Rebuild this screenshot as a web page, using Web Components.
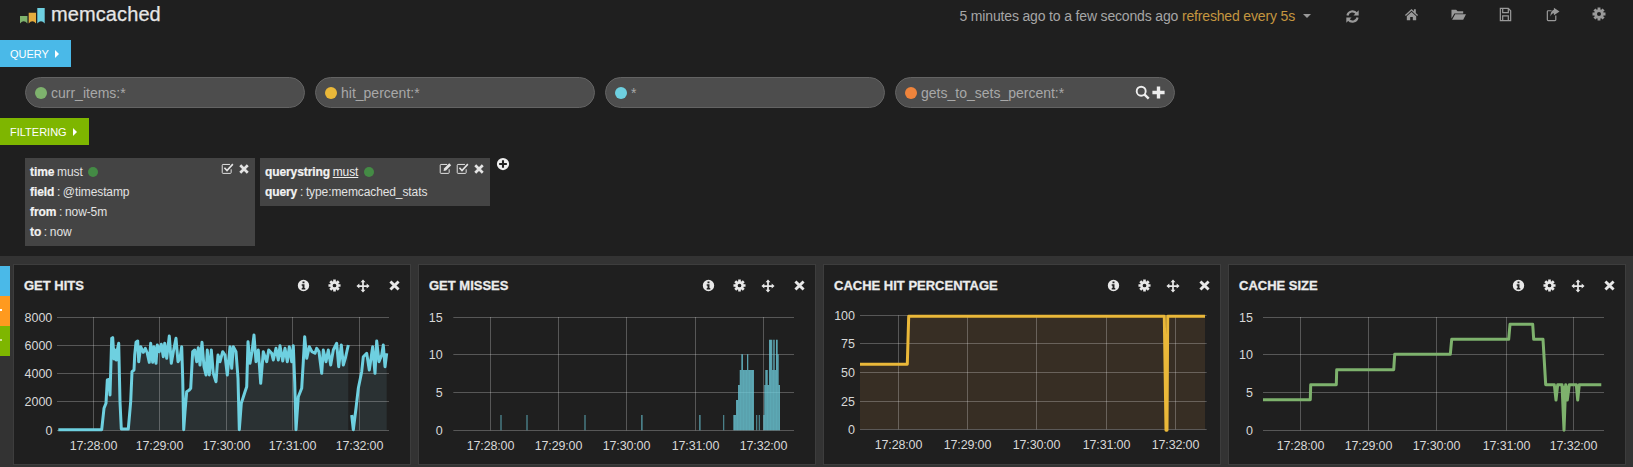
<!DOCTYPE html>
<html>
<head>
<meta charset="utf-8">
<title>memcached</title>
<style>
  html, body { margin: 0; height: 100%; background: #1f1f1f; overflow: hidden; }
  body { font-family: "Liberation Sans", Arial, sans-serif; color: #ddd; }
</style>
</head>
<body>
<km-dashboard></km-dashboard>

<script>
// Gear outline, 8 teeth, with a round hole. Generated since it is tedious to write by hand.
function gearPath() {
  let d = '';
  for (let i = 0; i < 8; i++) {
    const a = i * Math.PI / 4;
    const pts = [[-0.3, 5.4], [-0.22, 7.6], [0.22, 7.6], [0.3, 5.4]];
    pts.forEach(([da, r], j) => {
      const x = 8 + r * Math.sin(a + da), y = 8 - r * Math.cos(a + da);
      d += (i === 0 && j === 0 ? 'M' : 'L') + x.toFixed(2) + ' ' + y.toFixed(2);
    });
  }
  return d + 'Z M8 5.7 A2.3 2.3 0 1 0 8 10.3 A2.3 2.3 0 1 0 8 5.7Z';
}

const CIRCLE = 'M8 1 A7 7 0 1 1 8 15 A7 7 0 1 1 8 1Z ';
const ICONS = {
  home: '<path fill="currentColor" d="M8 2 L1 8.5 L2 9.6 L8 4.1 L14 9.6 L15 8.5 L12.6 6.3 V2.5 H10.6 V4.4Z M8 5.2 L3 9.8 V14.2 H6.6 V10.6 H9.4 V14.2 H13 V9.8Z"/>',
  folder: '<path fill="currentColor" d="M0.5 3 H5.5 L7 4.6 H13 V6.8 H3.6 L0.5 12.2Z M4.4 7.8 H16 L13 13.6 H1.2Z"/>',
  save: '<g fill="none" stroke="currentColor" stroke-width="1.3"><path d="M2.5 1.5 H11 L13.5 4 V14.5 H2.5Z"/><path d="M5 1.5 V6 H11 V1.5"/><path d="M5 14.5 V9.5 H11 V14.5"/></g>',
  share: '<path fill="none" stroke="currentColor" stroke-width="1.3" d="M11.5 9 V13.6 Q11.5 14.5 10.6 14.5 H3.4 Q2.5 14.5 2.5 13.6 V4.9 Q2.5 4 3.4 4 H7"/><path fill="currentColor" d="M9.5 0.8 L15.5 4.8 L9.5 8.8 V6.6 C7.5 6.6 6.5 8 6 10 C5.6 6.5 7.4 3.4 9.5 3Z"/>',
  refresh: '<g fill="none" stroke="currentColor" stroke-width="2.3"><path d="M2.6 7 A5.5 5.5 0 0 1 12.4 4.8"/><path d="M13.4 9 A5.5 5.5 0 0 1 3.6 11.2"/></g><path fill="currentColor" d="M14.6 1.4 V7 H9Z M1.4 14.6 V9 H7Z"/>',
  cog: '<path fill="currentColor" fill-rule="evenodd" d="' + gearPath() + '"/>',
  info: '<path fill="currentColor" fill-rule="evenodd" d="' + CIRCLE + 'M6.8 3 H9.2 V5.2 H6.8Z M5.8 6.4 H9.2 V11 H10.2 V12.8 H5.8 V11 H6.8 V8.2 H5.8Z"/>',
  move: '<path fill="currentColor" d="M8 0.5 L10.8 3.8 H9 V7 H12.2 V5.2 L15.5 8 L12.2 10.8 V9 H9 V12.2 H10.8 L8 15.5 L5.2 12.2 H7 V9 H3.8 V10.8 L0.5 8 L3.8 5.2 V7 H7 V3.8 H5.2Z"/>',
  times: '<path fill="none" stroke="currentColor" stroke-width="3.6" d="M3 3 L13 13 M13 3 L3 13"/>',
  check: '<path fill="none" stroke="currentColor" stroke-width="1.2" d="M12.5 9 V13 Q12.5 14 11.5 14 H2.5 Q1.5 14 1.5 13 V4 Q1.5 3 2.5 3 H11"/><path fill="none" stroke="currentColor" stroke-width="2" d="M4.2 7 L7.4 10.4 L14.6 2.6"/>',
  edit: '<path fill="none" stroke="currentColor" stroke-width="1.2" d="M12.5 9 V13 Q12.5 14 11.5 14 H2.5 Q1.5 14 1.5 13 V4 Q1.5 3 2.5 3 H10"/><path fill="currentColor" d="M5.6 11 L6.2 8 L12.6 1.6 L15 4 L8.6 10.4Z"/>',
  plus: '<path fill="currentColor" d="M6.2 1.5 H9.8 V6.2 H14.5 V9.8 H9.8 V14.5 H6.2 V9.8 H1.5 V6.2 H6.2Z"/>',
  pluscircle: '<path fill="currentColor" fill-rule="evenodd" d="' + CIRCLE + 'M6.8 3.6 H9.2 V6.8 H12.4 V9.2 H9.2 V12.4 H6.8 V9.2 H3.6 V6.8 H6.8Z"/>',
  search: '<g fill="none" stroke="currentColor"><circle cx="6.6" cy="6.6" r="4.8" stroke-width="2"/><path stroke-width="2.6" d="M10 10 L14.6 14.6"/></g>'
};

class KmIcon extends HTMLElement {
  connectedCallback() {
    const size = this.getAttribute('size') || 14;
    this.attachShadow({ mode: 'open' }).innerHTML = `
      <style>:host { display: block; width: ${size}px; height: ${size}px; } svg { display: block; }</style>
      <svg width="${size}" height="${size}" viewBox="0 0 16 16">${ICONS[this.getAttribute('name')]}</svg>`;
  }
}
customElements.define('km-icon', KmIcon);

// Top bar: logo, title, time range, nav icons
class KmNavbar extends HTMLElement {
  connectedCallback() {
    this.attachShadow({ mode: 'open' }).innerHTML = `
    <style>
      :host { display: flex; height: 40px; box-sizing: border-box; padding: 0 27px 0 20px; color: #999; }
      .logo { display: block; margin-top: 8px; }
      h1 { margin: 2px 0 0 5px; font: 20px/24px "Liberation Sans", Arial, sans-serif; letter-spacing: 0.1px; color: #e6e6e6; -webkit-text-stroke: 0.25px #e6e6e6; }
      .time { margin: 8px 0 0 auto; font-size: 14px; line-height: 16px; color: #a6a6a6; letter-spacing: -0.16px; white-space: nowrap; }
      .time span { color: #c4963f; }
      .caret { width: 0; height: 0; margin: 14px 0 0 8px; border: 4px solid transparent; border-top-color: #999; border-bottom: 0; }
      .refresh { margin: 9px 0 0 34px; }
      .nav { display: flex; gap: 32px; margin: 7px 0 0 44px; }
    </style>
    <svg class="logo" width="26" height="16" viewBox="0 0 26 16">
      <path fill="#7eb26d" d="M0 8 H7.4 V15.6 Q3.7 11 0 15.6Z"/>
      <path fill="#e5ac3e" d="M8.7 4.7 H16 V15.6 Q12.4 11 8.7 15.6Z"/>
      <path fill="#6ed0e0" d="M17.3 0 H24.7 V15.6 Q21 11 17.3 15.6Z"/>
    </svg>
    <h1>memcached</h1>
    <div class="time">5 minutes ago to a few seconds ago <span>refreshed every 5s</span></div>
    <div class="caret"></div>
    <km-icon class="refresh" name="refresh" size="15"></km-icon>
    <div class="nav">
      <km-icon name="home" size="15"></km-icon>
      <km-icon name="folder" size="15"></km-icon>
      <km-icon name="save" size="15"></km-icon>
      <km-icon name="share" size="15"></km-icon>
      <km-icon name="cog" size="14"></km-icon>
    </div>`;
  }
}
customElements.define('km-navbar', KmNavbar);

// Coloured section tab (QUERY, FILTERING)
class KmTab extends HTMLElement {
  connectedCallback() {
    this.attachShadow({ mode: 'open' }).innerHTML = `
    <style>
      :host { display: flex; align-items: center; width: max-content; height: 27px; padding: 0 12px 0 10px; background: var(--tab, #4ab9e8); color: #fff; font-size: 11px; }
      i { width: 0; height: 0; margin-left: 6px; border: 4px solid transparent; border-left-color: #fff; border-right: 0; }
    </style>
    <slot></slot><i></i>`;
  }
}
customElements.define('km-tab', KmTab);

// Query input pill with its colour dot
class KmPill extends HTMLElement {
  connectedCallback() {
    const actions = this.hasAttribute('actions') ? `
      <div class="actions"><km-icon name="search" size="15"></km-icon><km-icon name="plus" size="15"></km-icon></div>` : '';
    this.attachShadow({ mode: 'open' }).innerHTML = `
    <style>
      :host { display: flex; align-items: center; box-sizing: border-box; width: 280px; height: 31px; padding: 0 8px 0 9px; background: #4d4d4d; border: 1px solid #636363; border-radius: 16px; color: #a8a8a8; font-size: 14px; }
      .dot { width: 12px; height: 12px; margin-right: 4px; border-radius: 50%; background: ${this.getAttribute('color')}; }
      .actions { display: flex; gap: 1px; margin-left: auto; color: #eee; }
    </style>
    <span class="dot"></span><slot></slot>${actions}`;
  }
}
customElements.define('km-pill', KmPill);

// Filter box, rows are passed through the slot
class KmFilter extends HTMLElement {
  connectedCallback() {
    const icons = (this.getAttribute('icons') || 'check times').split(' ')
      .map(n => `<km-icon name="${n}" size="${n === 'times' ? 12 : 13}"></km-icon>`).join('');
    this.attachShadow({ mode: 'open' }).innerHTML = `
    <style>
      :host { display: block; position: relative; box-sizing: border-box; width: 230px; padding: 4px 5px; background: #444; color: #e2e2e2; font-size: 12px; line-height: 20px; }
      .actions { position: absolute; top: 4px; right: 5px; display: flex; align-items: center; gap: 4px; color: #e4e4e4; }
    </style>
    <div class="actions">${icons}</div>
    <slot></slot>`;
  }
}
customElements.define('km-filter', KmFilter);

// One filter row
class KmRow extends HTMLElement {
  connectedCallback() {
    this.attachShadow({ mode: 'open' }).innerHTML = `
    <style>
      :host { display: block; white-space: nowrap; letter-spacing: -0.1px; word-spacing: -0.5px; }
      ::slotted(b) { color: #f2f2f2; -webkit-text-stroke: 0.2px #f2f2f2; }
      ::slotted(u) { color: #eee; }
      ::slotted(i) { display: inline-block; width: 10px; height: 10px; margin-left: 3px; border-radius: 50%; background: #448b45; vertical-align: -1px; }
    </style>
    <slot></slot>`;
  }
}
customElements.define('km-row', KmRow);

// Panel frame with title and its four small icons
class KmPanel extends HTMLElement {
  connectedCallback() {
    this.attachShadow({ mode: 'open' }).innerHTML = `
    <style>
      :host { display: flex; flex-direction: column; box-sizing: border-box; width: 398px; height: 201px; background: #1f1f1f; border: 1px solid #3d3d3d; }
      header { display: flex; align-items: center; height: 41px; padding: 0 9px 0 10px; box-sizing: border-box; }
      h2 { flex: 1; margin: 0; font: bold 13px "Liberation Sans", Arial, sans-serif; color: #ececec; text-transform: uppercase; -webkit-text-stroke: 0.3px #ececec; }
      km-icon { color: #e8e8e8; }
      .a { margin-right: 18px; } .b { margin-right: 15px; } .c { margin-right: 18px; }
    </style>
    <header>
      <h2>${this.getAttribute('title')}</h2>
      <km-icon class="a" name="info" size="13"></km-icon>
      <km-icon class="b" name="cog" size="13"></km-icon>
      <km-icon class="c" name="move" size="14"></km-icon>
      <km-icon name="times" size="13"></km-icon>
    </header>
    <slot></slot>`;
  }
}
customElements.define('km-panel', KmPanel);

// Chart data is traced from a 3x crop of each panel, so every coordinate is divided by 3 when drawn
const TIMES = ['17:28:00', '17:29:00', '17:30:00', '17:31:00', '17:32:00'];
const CHARTS = {
  hits: {
    ox: 14, left: 171, right: 1167, labelRight: 157,
    ys: [[8000, 186], [6000, 271], [4000, 355], [2000, 439], [0, 526]],
    xs: [280, 478, 679, 877, 1078], color: '#6ed0e0', fill: '#2a3133', base: 526,
    lines: [
      [[175,524],[305,524],[312,460],[318,445],[322,375],[327,373],[330,420],[335,250],[338,248],[342,312],[345,285],[349,315],[352,285],[356,265],[360,440],[364,522],[385,522],[392,440],[396,350],[402,345],[404,300],[408,262],[413,258],[416,320],[422,275],[430,292],[436,280],[442,295],[448,322],[452,265],[458,322],[462,275],[468,325],[472,270],[478,290],[484,268],[490,305],[494,265],[500,310],[508,243],[514,325],[520,290],[528,250],[534,320],[540,310],[545,275],[548,370],[551,524],[555,470],[560,410],[568,405],[572,400],[578,290],[584,285],[590,320],[595,278],[600,330],[606,262],[612,335],[618,360],[622,285],[628,360],[634,285],[640,355],[648,380],[654,300],[660,320],[668,290],[675,300],[682,360],[690,275],[695,340],[700,275],[708,290],[714,370],[718,524],[724,445],[735,410],[740,395],[744,260],[750,325],[756,290],[762,240],[768,320],[775,285],[782,385],[790,290],[800,320],[806,285],[815,295],[820,315],[828,280],[835,315],[840,272],[848,318],[855,280],[862,320],[868,275],[875,320],[880,272],[884,380],[888,524],[895,425],[905,400],[910,320],[914,245],[920,310],[928,275],[936,290],[945,295],[950,280],[957,290],[965,355],[970,285],[978,320],[985,285],[992,330],[1000,285],[1010,265],[1016,335],[1024,270],[1030,330],[1036,310],[1045,270]],
      [[1055,480],[1060,524],[1068,460],[1075,400],[1085,350],[1090,305],[1100,295],[1108,345],[1118,275],[1125,355],[1130,258],[1137,320],[1145,300],[1150,270],[1155,335],[1160,295]]
    ]
  },
  misses: {
    ox: 4, left: 115, right: 1137, labelRight: 83,
    ys: [[15, 186], [10, 298], [5, 412], [0, 526]],
    xs: [226, 430, 634, 841, 1045], color: '#6ed0e0', base: 526,
    // step outlines of the bars: [x, top]
    bars: [
      [[256,480],[260,526]], [[334,480],[338,526]], [[508,480],[512,526]], [[678,480],[683,526]], [[852,480],[857,526]], [[924,480],[928,526]],
      [[955,480],[963,435],[969,390],[974,345],[979,298],[984,345],[996,298],[1000,345],[1017,526]],
      [[1023,480],[1027,526]], [[1031,480],[1035,526]],
      [[1045,480],[1048,390],[1051,345],[1058,390],[1062,254],[1072,345],[1075,254],[1079,345],[1083,254],[1088,298],[1091,390],[1095,526]]
    ]
  },
  percent: {
    ox: 4, left: 120, right: 1160, labelRight: 105,
    ys: [[100, 181], [75, 265], [50, 352], [25, 439], [0, 523]],
    xs: [235, 442, 649, 859, 1066], color: '#eab839', fill: '#372e24', base: 523,
    lines: [[[120,328],[262,328],[266,184],[1033,184],[1038,526],[1041,526],[1043,184],[1155,184]]]
  },
  size: {
    ox: 6, left: 120, right: 1143, labelRight: 90,
    ys: [[15, 186], [10, 298], [5, 412], [0, 526]],
    xs: [232, 436, 640, 848, 1051], color: '#7eb26d',
    lines: [[[120,434],[262,434],[263,389],[340,389],[341,344],[512,344],[515,298],[682,298],[686,253],[857,253],[861,208],[929,208],[932,253],[960,253],[968,389],[994,389],[999,435],[1004,389],[1017,389],[1023,526],[1028,389],[1033,435],[1039,389],[1060,389],[1064,435],[1069,389],[1135,389]]],
    patch: [[1017,392],[1039,392],[1033,435],[1028,400],[1023,526]]
  }
};
const CHART_TOP = 51; // svg top inside the crop, in real pixels

class KmChart extends HTMLElement {
  connectedCallback() {
    const c = CHARTS[this.getAttribute('data')];
    const X = x => x / 3 - c.ox, Y = y => y / 3 - CHART_TOP;
    const line = pts => pts.map(p => X(p[0]).toFixed(1) + ',' + Y(p[1]).toFixed(1)).join(' ');
    let s = '';
    // grid
    c.ys.forEach(([label, y]) => {
      const yy = Math.round(Y(y)) + 0.5;
      s += `<line x1="${X(c.left)}" x2="${X(c.right)}" y1="${yy}" y2="${yy}" class="g"/>`;
      s += `<text x="${X(c.labelRight)}" y="${yy + 4}" text-anchor="end">${label}</text>`;
    });
    const top = Y(c.ys[0][1]), bottom = Y(c.ys[c.ys.length - 1][1]);
    c.xs.forEach((x, i) => {
      const xx = Math.round(X(x)) + 0.5;
      s += `<text class="t" x="${xx}" y="${bottom + 19.5}" text-anchor="middle">${TIMES[i]}</text>`;
    });
    const vlines = c.xs.map(x => {
      const xx = Math.round(X(x)) + 0.5;
      return `<line x1="${xx}" x2="${xx}" y1="${top}" y2="${bottom}" class="g"/>`;
    }).join('');
    let fills = '', strokes = '';
    (c.lines || []).forEach(pts => {
      if (c.fill) {
        const first = pts[0], last = pts[pts.length - 1];
        fills += `<polygon fill="${c.fill}" points="${line([[first[0], c.base], ...pts, [last[0], c.base]])}"/>`;
      }
      strokes += `<polyline fill="none" stroke="${c.color}" stroke-width="3" stroke-linejoin="round" points="${line(pts)}"/>`;
    });
    (c.bars || []).forEach(steps => {
      // turn [x, top] steps into a closed stepped outline
      const pts = [[steps[0][0], c.base]];
      steps.forEach((st, i) => {
        const next = steps[i + 1];
        pts.push([st[0], st[1]]);
        if (next) pts.push([next[0], st[1]]);
      });
      pts.push([steps[steps.length - 1][0], c.base]);
      const wide = steps[steps.length - 1][0] - steps[0][0] > 20;
      strokes += `<polygon fill="${c.color}" fill-opacity="${wide ? 0.74 : 0.55}" points="${line(pts)}"/>`;
      // the big clusters are many overlapping bars, so they look faintly striped
      if (wide) strokes += `<polygon fill="url(#stripes)" points="${line(pts)}"/>`;
    });
    if (c.patch) strokes += `<polygon fill="${c.color}" points="${line(c.patch)}"/>`;
    this.attachShadow({ mode: 'open' }).innerHTML = `
    <style>
      :host { display: block; }
      svg { display: block; }
      text { font: 12.5px "Liberation Sans", Arial, sans-serif; fill: #d8d8d8; }
      .t { letter-spacing: -0.15px; }
      .g { stroke: #fff; stroke-opacity: 0.25; stroke-width: 1; }
    </style>
    <svg width="396" height="158">
      <defs><pattern id="stripes" width="3" height="4" patternUnits="userSpaceOnUse"><rect width="1" height="4" fill="#6ed0e0" fill-opacity="0.14"/></pattern></defs>
      ${fills}${s}${vlines}${strokes}
    </svg>`;
  }
}
customElements.define('km-chart', KmChart);

// Whole page
class KmDashboard extends HTMLElement {
  connectedCallback() {
    this.attachShadow({ mode: 'open' }).innerHTML = `
    <style>
      :host { display: block; }
      .pills { display: flex; gap: 10px; padding: 10px 25px; }
      .filters { display: flex; align-items: flex-start; gap: 5px; height: 98px; padding: 13px 25px 0; }
      .add { margin: -1px 0 0 1px; color: #eee; }
      .panels { display: flex; gap: 7px; height: 211px; padding-top: 8px; box-sizing: border-box; background: #333; }
      .side { width: 10px; margin: 2px 3px 0 0; flex: none; }
      .side div { position: relative; height: 30px; }
      .side div::after { content: ""; position: absolute; left: 0; top: 13px; width: 2px; height: 2px; background: var(--mark); }
      .panel-gap { margin-left: -7px; }
    </style>
    <km-navbar></km-navbar>
    <km-tab>QUERY</km-tab>
    <div class="pills">
      <km-pill color="#7eb26d">curr_items:*</km-pill>
      <km-pill color="#eab839">hit_percent:*</km-pill>
      <km-pill color="#6ed0e0">*</km-pill>
      <km-pill color="#ef843c" actions>gets_to_sets_percent:*</km-pill>
    </div>
    <km-tab style="--tab:#7eb600">FILTERING</km-tab>
    <div class="filters">
      <km-filter>
        <km-row><b>time</b> must <i></i></km-row>
        <km-row><b>field</b> : @timestamp</km-row>
        <km-row><b>from</b> : now-5m</km-row>
        <km-row><b>to</b> : now</km-row>
      </km-filter>
      <km-filter icons="edit check times">
        <km-row><b>querystring</b> <u>must</u> <i></i></km-row>
        <km-row><b>query</b> : type:memcached_stats</km-row>
      </km-filter>
      <km-icon class="add" name="pluscircle" size="14"></km-icon>
    </div>
    <div class="panels">
      <div class="side">
        <div style="background:#4ab9e8;--mark:transparent"></div>
        <div style="background:#ff9a1f;--mark:#fff"></div>
        <div style="background:#7eb600;--mark:#cde39a"></div>
      </div>
      <km-panel class="panel-gap" title="Get Hits"><km-chart data="hits"></km-chart></km-panel>
      <km-panel title="Get Misses"><km-chart data="misses"></km-chart></km-panel>
      <km-panel title="Cache Hit Percentage"><km-chart data="percent"></km-chart></km-panel>
      <km-panel title="Cache Size"><km-chart data="size"></km-chart></km-panel>
    </div>`;
  }
}
customElements.define('km-dashboard', KmDashboard);
</script>
</body>
</html>
